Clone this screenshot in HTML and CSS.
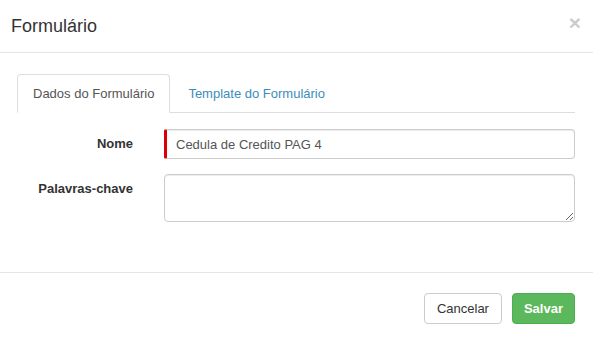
FILE: index.html
```html
<!DOCTYPE html>
<html lang="pt-BR">
<head>
    <meta charset="UTF-8">
    <meta name="viewport" content="width=device-width, initial-scale=1.0">
    <title>Formulário</title>
    <link rel="stylesheet" href="styles.css">
</head>
<body>
    <div class="modal">
        <!-- Cabeçalho -->
        <div class="modal-header">
            <h4 class="modal-title">Formulário</h4>
            <button class="close" type="button">&times;</button>
        </div>

        <!-- Corpo -->
        <div class="modal-body">
            <ul class="nav-tabs">
                <li class="active"><a href="#">Dados do Formulário</a></li>
                <li><a href="#">Template do Formulário</a></li>
            </ul>

            <form class="form-grid">
                <label class="form-label" for="nome">Nome</label>
                <input type="text" id="nome" class="form-control required" value="Cedula de Credito PAG 4">

                <label class="form-label" for="palavras">Palavras-chave</label>
                <textarea id="palavras" class="form-control area"></textarea>
            </form>
        </div>

        <!-- Rodapé -->
        <div class="modal-footer">
            <button class="btn btn-default" type="button">Cancelar</button>
            <button class="btn btn-success" type="button">Salvar</button>
        </div>
    </div>
</body>
</html>
```

FILE: styles.css
```css
body {
    margin: 0;
    padding: 0;
    background: #fff;
    font-family: "Liberation Sans", Arial, Helvetica, sans-serif;
    font-size: 13px;
    color: #333;
}
.modal {
    width: 593px;
    height: 340px;
    background: #fff;
}
.modal-header {
    display: flex;
    justify-content: space-between;
    align-items: flex-start;
    padding: 13px 12px 13px 11px;
    border-bottom: 1px solid #e5e5e5;
}
.modal-title {
    margin: 0;
    font-size: 18px;
    font-weight: normal;
    line-height: 26px;
    color: #333;
}
.close {
    background: none;
    border: none;
    padding: 0;
    margin-top: -3px;
    font-family: "Liberation Sans", Arial, sans-serif;
    font-size: 21px;
    font-weight: bold;
    line-height: 26px;
    color: #000;
    opacity: 0.2;
    cursor: pointer;
}
.modal-body {
    padding: 21px 18px 50px 17px;
}
.nav-tabs {
    display: flex;
    list-style: none;
    margin: 0;
    padding: 0;
    border-bottom: 1px solid #ddd;
}
.nav-tabs li {
    margin-bottom: -1px;
    margin-right: 2px;
}
.nav-tabs a {
    display: block;
    padding: 10px 15px;
    line-height: 17px;
    border: 1px solid transparent;
    border-radius: 4px 4px 0 0;
    color: #3c8dbc;
    text-decoration: none;
}
.nav-tabs .active a {
    color: #555;
    background: #fff;
    border-color: #ddd;
    border-bottom-color: transparent;
}
.form-grid {
    display: grid;
    grid-template-columns: 116px 1fr;
    column-gap: 31px;
    row-gap: 15px;
    margin-top: 16px;
}
.form-label {
    text-align: right;
    font-weight: bold;
    line-height: 18px;
    padding-top: 6px;
    color: #333;
}
.form-control {
    box-sizing: border-box;
    width: 100%;
    margin: 0;
    border: 1px solid #ccc;
    border-radius: 4px;
    box-shadow: inset 0 1px 1px rgba(0, 0, 0, 0.075);
    font-family: "Liberation Sans", Arial, sans-serif;
    font-size: 13px;
    color: #555;
    background: #fff;
}
.form-control.required {
    height: 30px;
    padding: 5px 12px 5px 9px;
    border-left: 3px solid #dd0000;
    border-radius: 2px 4px 4px 2px;
}
.form-control.area {
    height: 48px;
    padding: 6px 12px;
    resize: vertical;
}
.modal-footer {
    display: flex;
    justify-content: flex-end;
    gap: 10px;
    padding: 20px 18px 17px;
    border-top: 1px solid #e5e5e5;
}
.btn {
    height: 31px;
    padding: 0 12px;
    border: 1px solid transparent;
    border-radius: 4px;
    font-family: "Liberation Sans", Arial, sans-serif;
    font-size: 13px;
    line-height: 17px;
    cursor: pointer;
}
.btn-default {
    background: #fff;
    border-color: #ccc;
    color: #333;
}
.btn-success {
    background: #5cb85c;
    border-color: #4cae4c;
    color: #fff;
    font-weight: bold;
    padding: 0 11px;
}
```
